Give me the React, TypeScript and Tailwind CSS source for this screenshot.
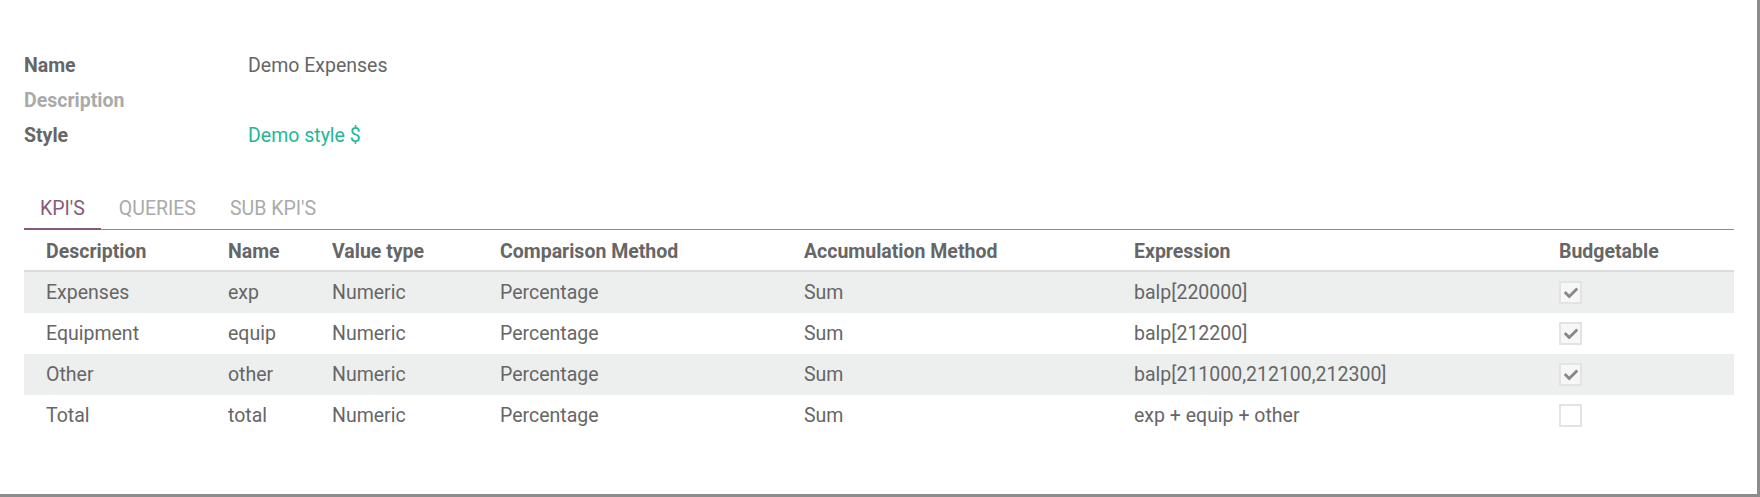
import React from "react";
import { FaCheck } from "react-icons/fa";

const rows = [
  { d: "Expenses", n: "exp", v: "Numeric", c: "Percentage", a: "Sum", e: "balp[220000]", b: true },
  { d: "Equipment", n: "equip", v: "Numeric", c: "Percentage", a: "Sum", e: "balp[212200]", b: true },
  { d: "Other", n: "other", v: "Numeric", c: "Percentage", a: "Sum", e: "balp[211000,212100,212300]", b: true },
  { d: "Total", n: "total", v: "Numeric", c: "Percentage", a: "Sum", e: "exp + equip + other", b: false },
];

const cols = "grid grid-cols-[182px_104px_168px_304px_330px_425px_1fr] pl-[22px]";

function Check({ on }: { on: boolean }) {
  return (
    <div
      className={
        "w-[23px] h-[23px] border-2 border-[#e3e3e3] flex items-center justify-center " +
        (on ? "bg-[#f7f7f7]" : "bg-white")
      }
    >
      {on && <FaCheck className="text-[#888888]" style={{ width: 14, height: 14 }} />}
    </div>
  );
}

export default function App() {
  return (
    <div className="w-[1760px] h-[497px] bg-white border-r-[3px] border-b-[3px] border-[#8d8d8d] font-['Roboto',sans-serif] text-[19.5px] text-[#666666] overflow-hidden">
      <div className="pl-[24px] pr-[23px] pt-[48px]">
        <div className="grid grid-cols-[224px_1fr] leading-[35px]">
          <div className="font-bold">Name</div>
          <div>Demo Expenses</div>
          <div className="font-bold text-[#aaaaaa]">Description</div>
          <div></div>
          <div className="font-bold">Style</div>
          <div className="text-[#21b799]">Demo style $</div>
        </div>

        <div className="mt-[42px] flex border-b border-[#8d8d8d] leading-[27px]">
          <div className="px-[16px] pb-[6px] mr-[2px] border-b-2 border-[#875a7b] -mb-px text-[#875a7b]">KPI'S</div>
          <div className="px-[16px] pb-[6px] mr-[2px] text-[#aaaaaa]">QUERIES</div>
          <div className="px-[16px] pb-[6px] mr-[2px] text-[#aaaaaa]">SUB KPI'S</div>
        </div>

        <div className={cols + " font-bold leading-[21px] pt-[11px] pb-[8px] border-b-2 border-[#dcdcdc]"}>
          <div>Description</div>
          <div>Name</div>
          <div>Value type</div>
          <div>Comparison Method</div>
          <div>Accumulation Method</div>
          <div>Expression</div>
          <div>Budgetable</div>
        </div>

        {rows.map((r, i) => (
          <div
            key={r.n}
            className={cols + " h-[41px] items-center leading-[21px] " + (i % 2 === 0 ? "bg-[#edefee]" : "bg-white")}
          >
            <div>{r.d}</div>
            <div>{r.n}</div>
            <div>{r.v}</div>
            <div>{r.c}</div>
            <div>{r.a}</div>
            <div>{r.e}</div>
            <div>
              <Check on={r.b} />
            </div>
          </div>
        ))}
      </div>
    </div>
  );
}
